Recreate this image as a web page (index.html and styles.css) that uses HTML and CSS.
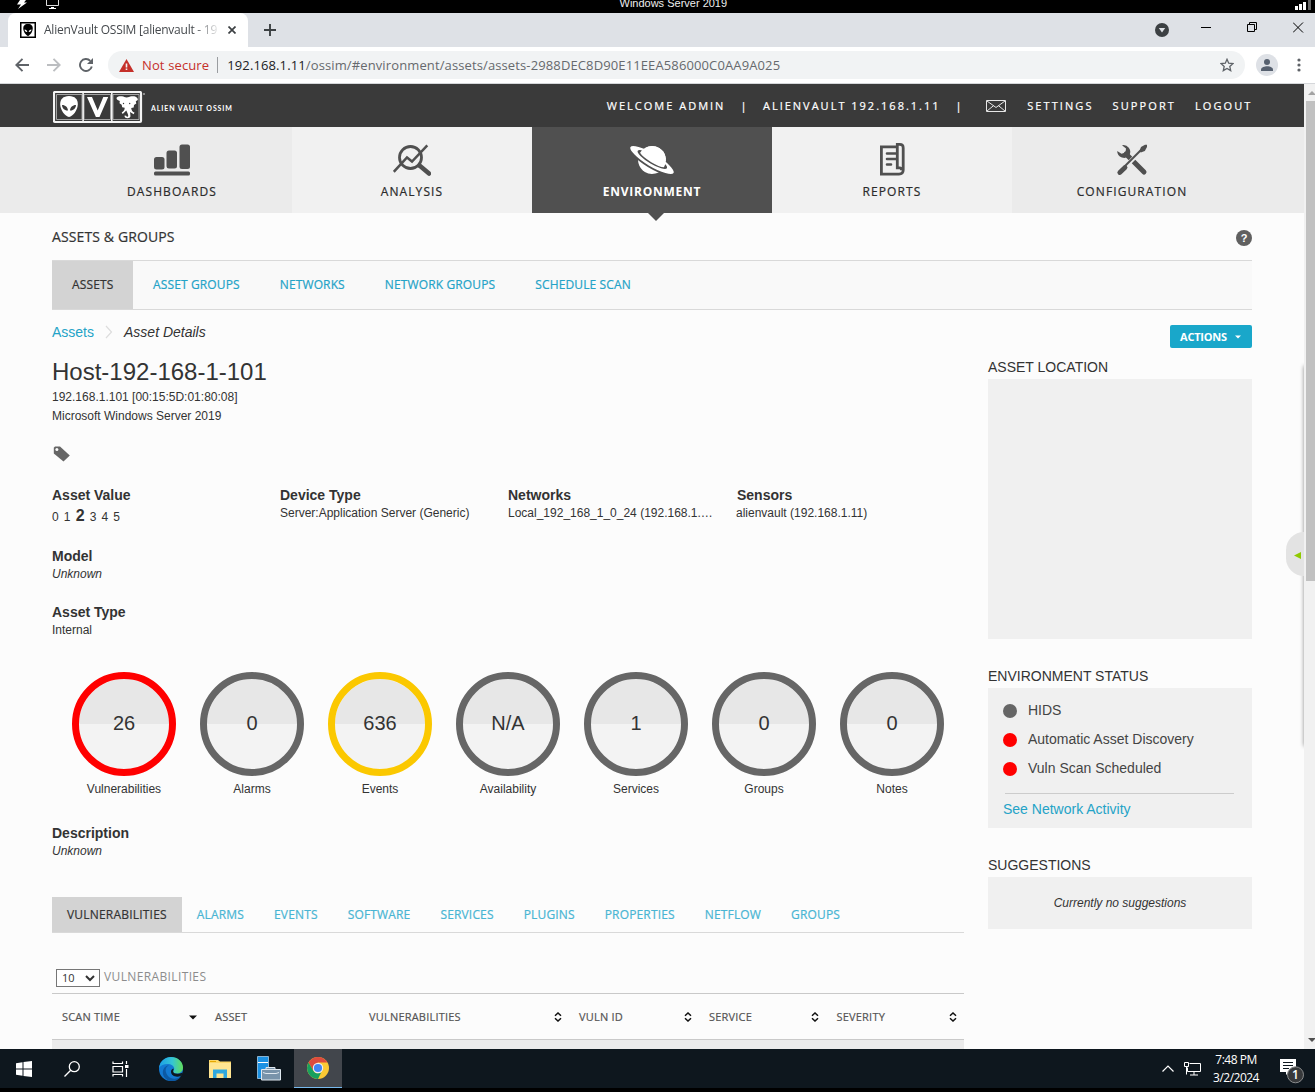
FILE: index.html
```html
<!DOCTYPE html>
<html lang="en">
<head>
<meta charset="utf-8">
<title>AlienVault OSSIM</title>
<link rel="stylesheet" href="styles.css">
</head>
<body>
<div class="screen">
  <div class="vm-bar">
    <svg class="vm-left" width="80" height="13" viewBox="0 0 80 13"><path d="M20 0h6l-2 2.400h3L18 9l3-4.500h-4z" fill="#fff"/><path d="M46.500 0v5.500h12V0" fill="none" stroke="#ddd"/><path d="M51 7h3v1h2v1h-7V8h2z" fill="#fff"/></svg>
    <span>Windows Server 2019</span>
    <svg class="vm-right" width="20" height="13" viewBox="0 0 20 13"><path d="M0 6h3v4H0zM4 4h3v6H4zM8 2h3v8H8z" fill="#fff"/><path d="M13 0h3v10h-3z" fill="#666"/></svg>
  </div>
  <div class="tabstrip">
    <div class="browser-tab">
      <svg width="16" height="16" viewBox="0 0 16 16"><path d="M0 0h16v16H0z"/><path d="M1.500 1.500h13v13h-13z" fill="#fff"/><path d="M8 2c3.500 0 5 2 4.700 5C12.400 10 10 13.500 8 14 6 13.500 3.600 10 3.300 7 3 4 4.500 2 8 2z"/><path d="M4.500 7.500c1.700 0 2.600 1 2.800 2.500-1.600.2-2.600-.8-2.800-2.500zm7 0c-1.700 0-2.600 1-2.800 2.500 1.600.2 2.600-.8 2.800-2.500z" fill="#fff"/></svg>
      <span class="tab-title">AlienVault OSSIM [alienvault - 19</span>
      <svg width="8" height="8" viewBox="0 0 8 8"><path d="M.5.5l7 7m0-7l-7 7" stroke="#3c4043" stroke-width="1.700"/></svg>
    </div>
    <svg class="new-tab" width="12" height="12" viewBox="0 0 12 12"><path d="M6 0v12M0 6h12" stroke="#3c4043" stroke-width="1.900"/></svg>
    <div class="window-buttons">
      <svg width="14" height="14" viewBox="0 0 14 14"><circle cx="7" cy="7" r="7" fill="#3c4043"/><path d="M3.800 5h6.400L7 9.600z" fill="#dee1e6"/></svg>
      <svg width="11" height="11" viewBox="0 0 11 11"><path d="M0 5.500h10" stroke="#000"/></svg>
      <svg width="11" height="11" viewBox="0 0 11 11"><path d="M.5 2.500h7v7h-7zM2.500 2.500v-2h7v7h-2" fill="none" stroke="#000"/></svg>
      <svg width="11" height="11" viewBox="0 0 11 11"><path d="M0 .5l10 10m0-10l-10 10" stroke="#000"/></svg>
    </div>
  </div>
  <div class="toolbar">
    <svg width="14" height="14" viewBox="0 0 14 14"><path d="M14 7H1.500M7.500.8L1.300 7l6.200 6.200" fill="none" stroke="#5f6368" stroke-width="1.900"/></svg>
    <svg width="14" height="14" viewBox="0 0 14 14"><path d="M0 7h12.500M6.500.8L12.700 7l-6.200 6.200" fill="none" stroke="#bcbec1" stroke-width="1.900"/></svg>
    <svg width="14" height="14" viewBox="0 0 14 14"><path d="M12.800 8.500A6 6 0 1 1 11.300 2.800" fill="none" stroke="#5f6368" stroke-width="1.900"/><path d="M14 0v6H8z" fill="#5f6368"/></svg>
    <div class="omnibox">
      <svg width="15" height="13" viewBox="0 0 15 13"><path d="M7.500 0L15 13H0z" fill="#c5302a"/><path d="M6.700 4.500h1.600v4H6.700zM6.700 9.500h1.600V11H6.700z" fill="#f1f3f4"/></svg>
      <span class="not-secure">Not secure</span>
      <span class="url"><b>192.168.1.11</b>/ossim/#environment/assets/assets-2988DEC8D90E11EEA586000C0AA9A025</span>
      <svg class="star" width="14" height="14" viewBox="0 0 14 14"><path d="M7 1.300l1.700 3.900 4.300.4-3.200 2.800.9 4.200L7 10.400l-3.700 2.200.9-4.200L1 5.600l4.300-.4z" fill="none" stroke="#5f6368" stroke-width="1.300"/></svg>
    </div>
    <svg class="profile" width="22" height="22" viewBox="0 0 22 22"><circle cx="11" cy="11" r="11" fill="#dee1e6"/><circle cx="11" cy="8" r="3" fill="#56606f"/><path d="M5 17v-1.500c0-2.300 4-3.300 6-3.300s6 1 6 3.300V17z" fill="#56606f"/></svg>
    <svg class="menu" width="4" height="14" viewBox="0 0 4 14"><g fill="#5f6368"><circle cx="2" cy="2" r="1.600"/><circle cx="2" cy="7" r="1.600"/><circle cx="2" cy="12" r="1.600"/></g></svg>
  </div>

  <div class="viewport">
    <div class="page">
      <header class="site-header">
        <svg class="logo" width="93" height="33" viewBox="0 0 93 33"><rect x="1" y="1" width="87" height="30" rx="1" fill="none" stroke="#f4f4f4" stroke-width="2.200"/><path d="M3.500 3.500h25.500v25H3.500zM31 3.500h26.500v25H31zM60 3.500h26v25H60z" fill="none" stroke="#bdbdbd" stroke-width=".8"/><path d="M29.300 2h1.600v28h-1.600zM58 2h1.600v28H58z" fill="#f4f4f4"/>
          <path d="M16 5c6 0 9 3.500 8.800 8.500C24.500 19.500 20 25 16 26c-4-1-8.500-6.500-8.800-12.500C7 8.500 10 5 16 5z" fill="#fff"/><path d="M9 14c3.500 0 5.700 2.300 6 5.500-3.500.3-5.800-2.200-6-5.500zm14 0c-3.500 0-5.700 2.300-6 5.500 3.500.3 5.800-2.200 6-5.500z" fill="#3a3a3a"/>
          <path d="M34 6h5l5.700 13.500L50.300 6h4.900L46.500 26h-3.600z" fill="#fff"/>
          <path d="M73.500 6.500c2 0 3-.8 5-1.200 4-.6 6.800 1.300 6.300 3.800l-2 1.200.5 2.200-2.300 1.500-.3 2.500-2.500.5c.2 2.300 1.300 4 3.300 4.500l-.8 1.700-3.700-2.200.4 3c.4 2.200-.7 3.300-3 3.300-2 0-3.200-1.200-2.800-2.700l1.600.1c.2 1 .8 1.300 1.500 1 .9-.6.6-1.600-.2-3.400l-1.200-2.800-3.600 3.500-1-1.600c2-1 3-2.400 3-4.600l-2.500-.5-.5-2.500-2.200-1.500.3-2.200-2.200-1.200C61.800 6.600 65 4.700 69 5.300c2 .4 2.800 1.200 4.500 1.200z" fill="#fff"/><circle cx="70.500" cy="12.500" r=".7" fill="#3a3a3a"/><circle cx="76.700" cy="12.500" r=".7" fill="#3a3a3a"/><path d="M90 3h2" stroke="#ddd"/></svg>
        <span class="brand">ALIEN VAULT OSSIM</span>
        <nav class="user-nav">
          <span class="welcome">WELCOME ADMIN</span><i>|</i><span class="server">ALIENVAULT 192.168.1.11</span><i class="second">|</i>
          <svg width="20" height="12" viewBox="0 0 20 12"><path d="M.5.5h19v11H.5zM1 1l9 6.500L19 1M1 11l6.500-5.300M19 11l-6.500-5.300" fill="none" stroke="#e6e6e6"/></svg>
          <a class="settings">SETTINGS</a><a class="support">SUPPORT</a><a class="logout">LOGOUT</a>
        </nav>
      </header>
      <nav class="main-nav">
        <div class="nav-item edge"><svg width="38" height="34" viewBox="0 0 38 34"><g fill="#505050"><rect x="1" y="15" width="10.500" height="12.500" rx="2.500"/><rect x="13.500" y="8.500" width="10.500" height="18" rx="2.500"/><rect x="26.500" y="2.500" width="10.500" height="24.500" rx="2.500"/><rect x="1" y="29.500" width="36" height="4" rx="1.500"/></g></svg><span>DASHBOARDS</span></div>
        <div class="nav-item"><svg width="38" height="34" viewBox="0 0 38 34"><g fill="none" stroke="#505050"><circle cx="17.500" cy="15.500" r="11" stroke-width="2.800"/><path d="M.8 29.800L14 15.500l5 4L34.300 3.300" stroke-width="2.500"/><path d="M26.500 23.500l9.500 8" stroke-width="4.500" stroke-linecap="round"/></g></svg><span class="analysis">ANALYSIS</span></div>
        <div class="nav-item active"><svg width="46" height="34" viewBox="0 0 46 34"><g transform="translate(23 18) rotate(31)"><circle r="13.900" fill="#fff"/><ellipse rx="26" ry="7.200" fill="#fff" stroke="#505050" stroke-width="1.800"/><ellipse cy="-.6" rx="17" ry="4.300" fill="#505050"/><path d="M-13.900 0A13.900 13.900 0 0 1 13.900 0Q10 2.200 0 2.200T-13.900 0z" fill="#fff"/></g></svg><span class="environment">ENVIRONMENT</span></div>
        <div class="nav-item"><svg width="28" height="34" viewBox="0 0 28 34"><path d="M18 4.900H3.400v27.200H21c3 0 4.200-1.500 4.200-4V6c0-2.400-1-3.700-3.400-3.700h-2.500v23.500h2.300c1.500 0 1.900.8 1.900 2.500" fill="none" stroke="#505050" stroke-width="2.800"/><path d="M9 11.500h9M9 17h9M9 22.500h4" stroke="#505050" stroke-width="2.600" stroke-linecap="round"/></svg><span>REPORTS</span></div>
        <div class="nav-item edge right"><svg width="32" height="34" viewBox="0 0 32 34"><path d="M10 12l18 18" stroke="#505050" stroke-width="5" stroke-linecap="round"/><path d="M6 3.300A6.800 6.800 0 0 1 13.500 13 6.800 6.800 0 0 1 1.200 9l4.300 2.800 4-1.300L10 6.500z" fill="#505050"/><path d="M28 6L5 29" stroke="#ebebeb" stroke-width="4.500"/><path d="M27 6L8 25" stroke="#505050" stroke-width="2"/><path d="M9 25.500L3.800 30.500" stroke="#505050" stroke-width="4.800" stroke-linecap="round"/><path d="M23.500 9l1.500-4 4-2.300h2V5l-2.200 4-4 1.500z" fill="#505050"/></svg><span>CONFIGURATION</span></div>
      </nav>
      <main class="content">
        <div class="section-title"><h2>ASSETS &amp; GROUPS</h2><span class="help">?</span></div>
        <nav class="sub-nav"><a class="current">ASSETS</a><a>ASSET GROUPS</a><a>NETWORKS</a><a>NETWORK GROUPS</a><a>SCHEDULE SCAN</a></nav>
        <div class="columns">
          <section class="left">
            <div class="crumbs"><a>Assets</a><svg width="8" height="14" viewBox="0 0 8 14"><path d="M1 1l5.500 6L1 13" fill="none" stroke="#ddd" stroke-width="1.200"/></svg><em>Asset Details</em></div>
            <h1>Host-192-168-1-101</h1>
            <p class="line">192.168.1.101 [00:15:5D:01:80:08]</p>
            <p class="line os">Microsoft Windows Server 2019</p>
            <div class="tag"><svg width="17" height="16" viewBox="0 0 17 16"><path d="M2 .5h5L16.800 9.500 10.500 15.500.8 7.500V1.700z" fill="#666"/><circle cx="3.900" cy="3.600" r="1.500" fill="#fcfcfc"/></svg></div>
            <div class="details">
              <div><h3>Asset Value</h3><p class="rating">0 1 <b>2</b> 3 4 5</p></div>
              <div><h3>Device Type</h3><p>Server:Application Server (Generic)</p></div>
              <div><h3>Networks</h3><p class="clip">Local_192_168_1_0_24 (192.168.1.…</p></div>
              <div class="sensors"><h3>Sensors</h3><p>alienvault (192.168.1.11)</p></div>
              <div class="model"><h3>Model</h3><p><em>Unknown</em></p></div>
              <div class="type"><h3>Asset Type</h3><p>Internal</p></div>
            </div>
            <div class="stats">
              <div class="stat"><div class="ring red">26</div>Vulnerabilities</div>
              <div class="stat"><div class="ring">0</div>Alarms</div>
              <div class="stat"><div class="ring yellow">636</div>Events</div>
              <div class="stat"><div class="ring">N/A</div>Availability</div>
              <div class="stat"><div class="ring">1</div>Services</div>
              <div class="stat"><div class="ring">0</div>Groups</div>
              <div class="stat"><div class="ring">0</div>Notes</div>
            </div>
            <div class="description"><h3>Description</h3><p><em>Unknown</em></p></div>
            <nav class="data-tabs"><a class="current">VULNERABILITIES</a><a>ALARMS</a><a>EVENTS</a><a>SOFTWARE</a><a>SERVICES</a><a>PLUGINS</a><a>PROPERTIES</a><a>NETFLOW</a><a>GROUPS</a></nav>
            <div class="length"><span class="select">10<svg width="10" height="7" viewBox="0 0 10 7"><path d="M1 1l4 4 4-4" fill="none" stroke="#333" stroke-width="2"/></svg></span><span>VULNERABILITIES</span></div>
            <div class="table-head">
              <span>SCAN TIME<svg width="8" height="5" viewBox="0 0 8 5"><path d="M0 .5h8L4 4.500z" fill="#111"/></svg></span>
              <span>ASSET</span>
              <span>VULNERABILITIES<svg class="sort" width="8" height="10" viewBox="0 0 8 10"><path d="M1 3.800L4 1l3 2.800M1 6.200L4 9l3-2.800" fill="none" stroke="#111" stroke-width="1.500"/></svg></span>
              <span>VULN ID<svg class="sort" width="8" height="10" viewBox="0 0 8 10"><path d="M1 3.800L4 1l3 2.800M1 6.200L4 9l3-2.800" fill="none" stroke="#111" stroke-width="1.500"/></svg></span>
              <span>SERVICE<svg class="sort" width="8" height="10" viewBox="0 0 8 10"><path d="M1 3.800L4 1l3 2.800M1 6.200L4 9l3-2.800" fill="none" stroke="#111" stroke-width="1.500"/></svg></span>
              <span>SEVERITY<svg class="sort" width="8" height="10" viewBox="0 0 8 10"><path d="M1 3.800L4 1l3 2.800M1 6.200L4 9l3-2.800" fill="none" stroke="#111" stroke-width="1.500"/></svg></span>
            </div>
            <div class="table-row"></div>
          </section>
          <aside class="right">
            <button class="actions">ACTIONS<svg width="6" height="4" viewBox="0 0 6 4"><path d="M0 .5h6L3 3.500z" fill="#fff"/></svg></button>
            <h4>ASSET LOCATION</h4>
            <div class="panel map"></div>
            <h4>ENVIRONMENT STATUS</h4>
            <div class="panel status">
              <p><i></i>HIDS</p><p><i class="bad"></i>Automatic Asset Discovery</p><p><i class="bad"></i>Vuln Scan Scheduled</p>
              <hr><a>See Network Activity</a>
            </div>
            <h4>SUGGESTIONS</h4>
            <div class="panel suggestions"><em>Currently no suggestions</em></div>
          </aside>
        </div>
      </main>
      <div class="drawer-shadow"></div>
      <div class="drawer-handle"><svg width="7" height="7" viewBox="0 0 7 7"><path d="M7 0v7L0 3.500z" fill="#8fca00"/></svg></div>
    </div>
    <div class="scrollbar"><svg width="9" height="17" viewBox="0 0 9 17"><path d="M2 11l4-4 4 4z" fill="#a3a3a3"/></svg><div class="thumb"></div><svg class="down" width="9" height="17" viewBox="0 0 9 17"><path d="M2 6h8l-4 4z" fill="#505050"/></svg></div>
  </div>

  <div class="taskbar">
    <div class="task"><svg width="16" height="16" viewBox="0 0 16 16"><path d="M0 2.200l6.500-1v6.300H0zM7.500 1L16 0v7.500H7.500zM0 8.500h6.500v6.300l-6.500-1zM7.500 8.500H16V16l-8.500-1z" fill="#fff"/></svg></div>
    <div class="task"><svg width="16" height="16" viewBox="0 0 16 16"><g fill="none" stroke="#fff" stroke-width="1.300"><circle cx="10.300" cy="5.700" r="5"/><path d="M6.700 9.300L.5 15.500"/></g></svg></div>
    <div class="task"><svg width="17" height="16" viewBox="0 0 17 16"><path d="M1 .5v2h9.500v-2M1 15.500v-2h9.500v2M1 5.500h9.500v5.500H1zM14.500 0v3M14.500 8v8" fill="none" stroke="#fff" stroke-width="1.200"/><path d="M13 4h3.500v3H13z" fill="#fff"/></svg></div>
    <div class="task app first"><svg width="24" height="24" viewBox="0 0 24 24"><defs><linearGradient id="edge-top" x1="0" x2="1"><stop stop-color="#1b9ee6"/><stop offset=".55" stop-color="#35c5d5"/><stop offset="1" stop-color="#62df59"/></linearGradient></defs><circle cx="12" cy="12" r="12" fill="#1379d2"/><path d="M0 11C1 4 6 0 12 0c7 0 12 5 12 10.500 0 3.500-2.500 6-6 6-2.500 0-4-.8-4-1.800 0-.8 1.200-1.200 1.200-3.200C15.200 8.800 12 7 8.500 7 5 7 1.500 8.500 0 11z" fill="url(#edge-top)"/><path d="M10 8.200C6 10 5.500 15 9 19c3 3.500 8.500 3.500 12.800.5C18 25.500 10 25.500 6 21 1.500 16 4.500 8.500 10 8.200z" fill="#0c59a4"/><path d="M14.200 14.500c.2 2 4 3.300 9 1.300.5.700-.2 2-1.200 3-4 2-10 .5-10-4.300 0-1.500 1-2.500 2.500-3 .4 1.300-.5 2-.3 3z" fill="#0e1820"/></svg></div>
    <div class="task app"><svg width="22" height="18" viewBox="0 0 22 18"><path d="M0 0h9l2 1.500h11V18H0z" fill="#fbd667"/><path d="M0 3h22v15H0z" fill="#ffe591"/><path d="M1 1h6v1H1z" fill="#e6a800"/><path d="M4 18V9.500h14V18h-3.500v-4.500h-7V18z" fill="#31a9df"/></svg></div>
    <div class="task app"><svg width="24" height="25" viewBox="0 0 24 25"><path d="M.5.500h11v22H.5z" fill="#1b91e3" stroke="#b9dcf5" stroke-width=".7"/><path d="M1 6.500h10" stroke="#fff"/><path d="M9 13v-1.500h9V13M4.500 13.500h19v10.500h-19z" fill="#7893aa" stroke="#dfe8ef"/><path d="M6 16.500l3 1h10l3-1" stroke="#dfe8ef" fill="none"/></svg></div>
    <div class="task running"><svg width="24" height="24" viewBox="0 0 24 24"><circle cx="12" cy="12" r="11" fill="#fbc934"/><path d="M2.500 6.500A11 11 0 0 1 21.500 6.500H12L7.200 14.700z" fill="#dd4b3e"/><path d="M2.500 6.500l4.800 8.200c1.500 2.700 5 3.500 8 1.500L12 23A11 11 0 0 1 2.500 6.500z" fill="#18a05e"/><circle cx="12" cy="12" r="5.200" fill="#f1f1f1"/><circle cx="12" cy="12" r="4.100" fill="#4285f4"/></svg></div>
    <div class="tray">
      <svg width="12" height="7" viewBox="0 0 12 7"><path d="M.5 6.500L6 1l5.500 5.500" fill="none" stroke="#fff" stroke-width="1.200"/></svg>
      <svg width="17" height="14" viewBox="0 0 17 14"><path d="M5.500 1.500h11v8h-13v-4M.5.5h4v4h-4zM2.500 4.500v8M10 10v3M6 13h8" fill="none" stroke="#fff"/></svg>
      <div class="clock"><span>7:48 PM</span><span>3/2/2024</span></div>
      <svg class="note" width="26" height="25" viewBox="0 0 26 25"><path d="M0 0h16v13H9l-3 3v-3H0z" fill="#fff"/><path d="M3 3.500h10M3 6.500h10M3 9.500h6" stroke="#0e1820"/><circle cx="15.500" cy="15.800" r="8" fill="#37393b" stroke="#8a8c8d"/><text x="15.500" y="20" text-anchor="middle" fill="#fff" font-family="Open Sans, sans-serif" font-size="12" font-weight="600">1</text></svg>
    </div>
  </div>
</div>
</body>
</html>
```
FILE: styles.css
```css
* { box-sizing: border-box; }
body { margin: 0; background: #000; font-family: "Liberation Sans", sans-serif; color: #333; }
h1, h2, h3, h4, p { margin: 0; font-weight: 400; }
svg { display: block; flex: none; }
.screen { width: 1315px; height: 1092px; overflow: hidden; display: flex; flex-direction: column; background: #000; }

/* Remote session bar */
.vm-bar { height: 13px; flex: none; display: grid; grid-template-columns: 1fr auto 1fr; color: #eee; font-size: 11px; line-height: 7px; }
.vm-bar span { width: 108px; white-space: nowrap; margin-left: 32px; }
.vm-right { justify-self: end; }

/* Browser chrome */
.tabstrip { height: 34px; flex: none; background: #dee1e6; display: flex; align-items: flex-end; padding-left: 8px; }
.browser-tab { width: 240px; height: 34px; background: #fff; border-radius: 8px 8px 0 0; display: flex; align-items: center; padding: 0 12px; }
.tab-title { width: 174px; margin: -1px 10px 0 8px; white-space: nowrap; font: 12px "Open Sans", sans-serif; letter-spacing: -.24px; color: #45494d; -webkit-mask-image: linear-gradient(90deg, #000 150px, transparent 177px); mask-image: linear-gradient(90deg, #000 150px, transparent 177px); }
.new-tab { margin: 0 0 11px 16px; }
.window-buttons { margin-left: auto; display: flex; align-items: center; height: 34px; padding-right: 11px; gap: 35px; }
.window-buttons svg:not(:first-child) { margin-bottom: 6px; }
.window-buttons svg:first-child { margin-right: -3px; }
.toolbar { height: 37px; flex: none; background: #fff; border-bottom: 1px solid #d5d7da; display: flex; align-items: center; padding-left: 15px; gap: 18px; }
.omnibox { width: 1137px; height: 28px; margin-left: -3px; border-radius: 14px; background: #f1f3f4; display: flex; align-items: center; padding: 0 11px; margin-right: -7px; font-family: "Open Sans", sans-serif; }
.not-secure { color: #c5302a; margin-left: 8px; padding-right: 8px; border-right: 1px solid #9a9da0; line-height: 16px; font-size: 13px; letter-spacing: .13px; }
.url { margin-left: 9px; font-size: 13px; letter-spacing: .12px; color: #66696d; white-space: nowrap; }
.url b { font-weight: 400; color: #202124; }
.star { margin-left: auto; }
.menu { margin-left: 1px; }

.viewport { height: 965px; flex: none; display: flex; }
.page { width: 1304px; height: 965px; position: relative; overflow: hidden; background: #fcfcfc; }

/* Site header */
.site-header { height: 43px; background: #3a3a3a; display: flex; align-items: center; padding: 0 51.500px 0 53px; color: #fff; font-family: "Open Sans", sans-serif; }
.logo { margin-top: 3px; }
.brand { margin: 5px 0 0 5px; font: 700 7px Lato, sans-serif; letter-spacing: .9px; }
.user-nav { margin-left: auto; display: flex; align-items: center; font-size: 11px; letter-spacing: 2px; white-space: nowrap; -webkit-text-stroke: .2px; }
.user-nav i { font-style: normal; margin: 0 14.500px 0 15px; }
.user-nav .second { margin-right: 22.500px; }
.user-nav a { margin-left: 19px; letter-spacing: 2.100px; }
.user-nav .settings { margin-left: 21px; }

/* Main navigation */
.main-nav { height: 86px; display: flex; background: #f1f1f1; }
.nav-item { width: 240px; padding-top: 15px; display: flex; flex-direction: column; align-items: center; font: 12px/20px "Open Sans", sans-serif; letter-spacing: 1.100px; color: #2b2b2b; gap: 6px; -webkit-text-stroke: .2px; }
.edge { width: 292px; padding-left: 52px; background: #ebebeb; }
.edge.right { padding: 15px 52px 0 0; }
.active { background: #505050; color: #fff; font-weight: 700; letter-spacing: .75px; position: relative; -webkit-text-stroke: 0; }
.active::after { content: ""; position: absolute; top: 100%; left: 116px; border: 8px solid transparent; border-top-color: #505050; border-bottom: 0; }

/* Content */
.content { width: 1200px; margin-left: 52px; }
.section-title { height: 47px; display: flex; justify-content: space-between; align-items: center; }
h2 { font: 14px/20px "Open Sans", sans-serif; letter-spacing: .12px; -webkit-text-stroke: .2px; }
.help { width: 16px; height: 16px; margin-top: 3px; border-radius: 50%; background: #606060; color: #fff; font: 700 11px/16px "Liberation Sans", sans-serif; text-align: center; }
.sub-nav { height: 50px; background: #f9f9f9; border: solid #d9d9d9; border-width: 1px 0; display: flex; font: 12px/48px "Open Sans", sans-serif; letter-spacing: .13px; color: #24a3c7; -webkit-text-stroke: .2px; }
.sub-nav a { padding: 0 20px; }
.current { background: #d3d3d3; color: #333; }
.sub-nav .current { width: 81px; padding-right: 0; }
.columns { display: grid; grid-template-columns: 912px 264px; gap: 24px; }
.crumbs { height: 44px; display: flex; align-items: center; font-size: 14px; gap: 11px; }
.crumbs a { color: #24a3c7; }
h1 { font-size: 24px; line-height: 35px; height: 34px; }
.line { font-size: 12px; line-height: 19px; }
.tag { height: 60px; padding: 20px 0 0 1px; }
.details { display: grid; grid-template-columns: repeat(4, 228px); }
.details > div, .description { font-size: 12px; line-height: 18px; height: 61px; }
.details .sensors h3 { padding-left: 1px; }
.details .model { grid-column: 1 / -1; height: 56px; }
.details .type { height: 69px; }
h3 { font-size: 14px; line-height: 18px; font-weight: 700; }
.clip { white-space: nowrap; }
.rating { word-spacing: 1.800px; line-height: 24px; }
.rating b { font-size: 16px; }
.stats { height: 152px; display: flex; gap: 24px; padding-left: 20px; }
.stat { width: 104px; font-size: 12px; line-height: 18px; text-align: center; }
.ring { height: 104px; margin-bottom: 4px; border: 7px solid #666; border-radius: 50%; background: linear-gradient(#e7e7e7 50%, #f3f3f3 50%) padding-box; font-size: 20px; line-height: 88px; }
.red { border-color: #f00; }
.yellow { border-color: #fbc800; }
.description { height: 73px; }
.data-tabs { height: 36px; border-bottom: 1px solid #d9d9d9; display: flex; font: 12px/35px "Open Sans", sans-serif; letter-spacing: .16px; color: #49b5d3; -webkit-text-stroke: .2px; }
.data-tabs a { padding: 0 15px; }
.data-tabs .current { letter-spacing: .2px; }
.length { height: 61px; border-bottom: 1px solid #c9c9c9; padding: 34px 4px 0; display: flex; gap: 4px; font: 12px/20px "Open Sans", sans-serif; letter-spacing: .37px; color: #8c8c8c; }
.select { width: 44px; height: 18px; margin-top: 2px; border: 1px solid #767676; background: #fff; color: #333; display: flex; align-items: center; justify-content: space-between; padding: 0 4px 0 5px; font-size: 11px; letter-spacing: 0; }
.table-head { height: 46px; border-bottom: 1px solid #c9c9c9; display: grid; grid-template-columns: 153px 154px 210px 130px 127.500px 137.500px; font: 11px/46px "Open Sans", sans-serif; letter-spacing: .2px; color: #555; -webkit-text-stroke: .2px; }
.table-head span { padding: 0 7.500px 0 10px; display: flex; align-items: center; justify-content: space-between; }
.table-head span:first-child { padding-right: 8.500px; }
.table-row { height: 20px; background: #ebebeb; }

/* Sidebar */
.right { display: flex; flex-direction: column; }
.actions { align-self: flex-end; width: 82px; height: 23px; margin: 15px 0 8px; border: 0; border-radius: 2px; background: #19a7ca; color: #fff; font: 700 11px "Open Sans", sans-serif; padding: 0 11px 1px 10px; display: flex; align-items: center; justify-content: space-between; letter-spacing: -.2px; }
.actions svg { margin-top: 2px; }
h4 { font-size: 14px; line-height: 22px; height: 23px; }
.panel { background: #f0f0f0; }
.map { height: 260px; margin-bottom: 26px; }
.status { height: 140px; margin-bottom: 26px; padding: 8px 15px; font-size: 14px; color: #444; }
.status p { height: 29px; line-height: 29px; display: flex; align-items: center; }
.status i { width: 14px; height: 14px; border-radius: 50%; background: #666; margin-right: 11px; }
.status .bad { background: #f00; }
.status hr { margin: 10px 3px 6px 2px; border: 0; height: 1px; background: #ccc; }
.status a { color: #24a3c7; line-height: 19px; display: block; }
.suggestions { height: 52px; font-size: 12px; line-height: 52px; text-align: center; }

/* Slide-out drawer edge */
.drawer-shadow { position: absolute; right: -4px; top: 282px; width: 4px; height: 380px; box-shadow: 0 0 4px #888; }
.drawer-handle { position: absolute; right: 0; top: 448px; width: 18px; height: 44px; border-radius: 22px 0 0 22px; background: #e3e3e3; display: flex; align-items: center; padding: 2px 0 0 8px; }
.scrollbar { width: 11px; background: #f1f1f1; display: flex; flex-direction: column; padding-left: 2px; }
.thumb { height: 480px; background: #c1c1c1; }
.down { margin-top: auto; }

/* Taskbar */
.taskbar { height: 39px; flex: none; background: #0e171e; display: flex; }
.task { width: 48px; display: flex; align-items: center; justify-content: center; }
.app { width: 49px; }
.first { width: 51px; padding-left: 3px; }
.running { width: 48px; margin-left: 1px; background: #42464c; border-bottom: 1px solid #76b9ed; }
.tray { margin-left: auto; display: flex; align-items: center; color: #fff; }
.tray > svg:first-child { margin-right: 10px; }
.clock { width: 64px; margin: 0 8px 0 3px; display: flex; flex-direction: column; align-items: center; font: 12px/18px "Open Sans", sans-serif; letter-spacing: -.5px; }
.note { margin: 5px 9px 0 4px; }
```
